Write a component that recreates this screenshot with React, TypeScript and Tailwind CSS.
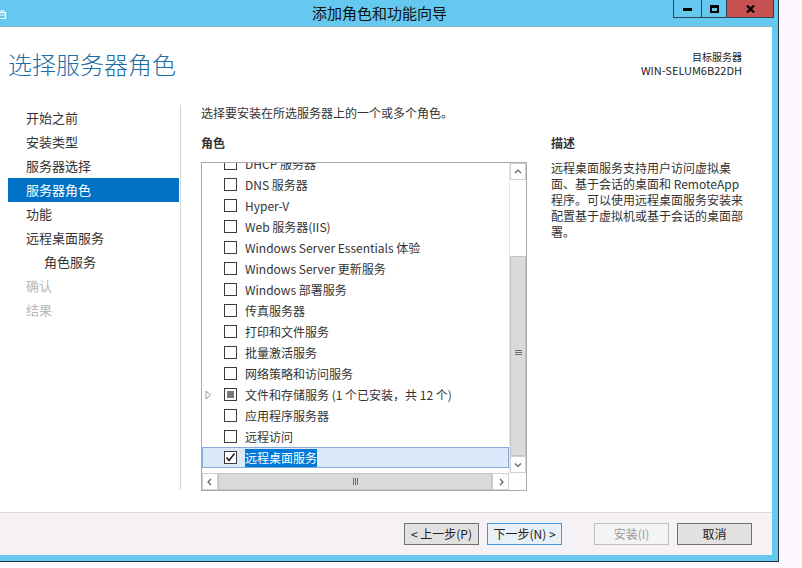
import React from 'react';

type Role = { label: string; state?: 'checked' | 'partial'; expandable?: boolean; selected?: boolean };

const roles: Role[] = [
    { label: 'DHCP 服务器' },
    { label: 'DNS 服务器' },
    { label: 'Hyper-V' },
    { label: 'Web 服务器(IIS)' },
    { label: 'Windows Server Essentials 体验' },
    { label: 'Windows Server 更新服务' },
    { label: 'Windows 部署服务' },
    { label: '传真服务器' },
    { label: '打印和文件服务' },
    { label: '批量激活服务' },
    { label: '网络策略和访问服务' },
    { label: '文件和存储服务 (1 个已安装，共 12 个)', state: 'partial', expandable: true },
    { label: '应用程序服务器' },
    { label: '远程访问' },
    { label: '远程桌面服务', state: 'checked', selected: true },
];

const steps = [
    { label: '开始之前' },
    { label: '安装类型' },
    { label: '服务器选择' },
    { label: '服务器角色', active: true },
    { label: '功能' },
    { label: '远程桌面服务' },
    { label: '角色服务', indent: true },
    { label: '确认', disabled: true },
    { label: '结果', disabled: true },
];

function Checkbox({ state }: { state?: 'checked' | 'partial' }) {
    return (
        <div className="w-[13px] h-[13px] border border-[#3c3c3c] bg-white flex items-center justify-center shrink-0">
            {state === 'partial' && <div className="w-[7px] h-[7px] bg-[#7a7a7a]" />}
            {state === 'checked' && (
                <svg width="11" height="11" viewBox="0 0 11 11">
                    <path d="M1.5 5.5 L4 8.5 L9.5 1.5" fill="none" stroke="#222" strokeWidth="1.6" />
                </svg>
            )}
        </div>
    );
}

function Chevron({ dir }: { dir: 'up' | 'down' | 'left' | 'right' }) {
    const d = {
        up: 'M2 6 L5 3 L8 6',
        down: 'M2 3.5 L5 6.5 L8 3.5',
        left: 'M6 2 L3 5 L6 8',
        right: 'M4 2 L7 5 L4 8',
    }[dir];
    return (
        <svg width="10" height="10" viewBox="0 0 10 10">
            <path d={d} fill="none" stroke="#606060" strokeWidth="1.2" />
        </svg>
    );
}

export default function App() {
    return (
        <div className="flex w-[802px] h-[568px] bg-[#fdf8fd] font-['Noto_Sans_CJK_SC',sans-serif] text-[#333]">
            {/* Window */}
            <div className="w-[779px] h-[562px] bg-[#64c8ef] border-r border-b border-[#28323c] flex flex-col shrink-0">
                {/* Title bar */}
                <div className="relative h-[27px] border-b border-[#86b6cc] flex items-center shrink-0">
                    <svg className="absolute left-0 top-[10px]" width="7" height="9" viewBox="0 0 7 9">
                        <path d="M-1 2.5 H5.5 V8.5 H-1" fill="none" stroke="#fff" strokeWidth="1.2" />
                        <path d="M1 2.5 V0.8 H4 V2.5" fill="none" stroke="#fff" strokeWidth="1" />
                        <path d="M-1 5 H5.5" stroke="#fff" strokeWidth="1" />
                    </svg>
                    <span className="pl-[312px] text-[15px] text-[#111] leading-none -mt-[2px]">添加角色和功能向导</span>
                    <div className="absolute right-[4px] top-0 flex h-[18px] border border-t-0 border-[#33414f]">
                        <div className="w-[28px] flex items-center justify-center border-r border-[#33414f]">
                            <div className="w-[9px] h-[3px] bg-black mt-[2px]" />
                        </div>
                        <div className="w-[25px] flex items-center justify-center border-r border-[#33414f]">
                            <div className="w-[9px] h-[8px] border-2 border-t-[3px] border-black" />
                        </div>
                        <div className="w-[46px] bg-[#c75050] flex items-center justify-center">
                            <svg width="9" height="8" viewBox="0 0 9 8">
                                <path d="M1 0.5 L8 7.5 M8 0.5 L1 7.5" stroke="#000" strokeWidth="2.2" />
                            </svg>
                        </div>
                    </div>
                </div>

                <div className="flex-1 flex pr-[6px] pb-[6px] min-h-0">
                    <div className="flex-1 bg-white flex flex-col">
                        {/* Header */}
                        <div className="h-[78px] flex justify-between shrink-0">
                            <h1 className="pl-[8px] pt-[22px] text-[24px] leading-[30px] font-light text-[#1b6da5]">选择服务器角色</h1>
                            <div className="pr-[30px] pt-[24px] text-right text-[#222]">
                                <div className="text-[10px] leading-[12px]">目标服务器</div>
                                <div className="mt-[1px] text-[11px] leading-[13px]">WIN-SELUM6B22DH</div>
                            </div>
                        </div>

                        {/* Body */}
                        <div className="h-[386px] flex shrink-0">
                            {/* Step nav */}
                            <div className="w-[181px] border-r border-[#d4d4d4] pl-[8px] pr-[1px] pt-[1px] mb-[1px]">
                                {steps.map((s) => (
                                    <div
                                        key={s.label}
                                        className={`h-[24px] flex items-center text-[13px] ${s.indent ? 'pl-[36px]' : 'pl-[18px]'} ${s.active ? 'bg-[#0072c6] text-white' : s.disabled ? 'text-[#b8b8b8]' : 'text-[#333]'}`}
                                    >
                                        {s.label}
                                    </div>
                                ))}
                            </div>

                            {/* Main */}
                            <div className="pl-[20px] flex">
                                <div className="flex flex-col">
                                    <p className="text-[12px] leading-[16px]">选择要安装在所选服务器上的一个或多个角色。</p>
                                    <h3 className="mt-[14px] text-[12px] leading-[16px] font-bold">角色</h3>
                                    <div className="mt-[11px] w-[326px] h-[329px] border border-[#ababab] flex flex-col">
                                        <div className="flex flex-1 min-h-0">
                                            <div className="flex-1 overflow-hidden">
                                                <div className="-mt-[10px]">
                                                    {roles.map((r) => (
                                                        <div
                                                            key={r.label}
                                                            className={`h-[21px] flex items-center border text-[12px] ${r.selected ? 'bg-[#dce9fa] border-[#84aad9]' : 'border-transparent'}`}
                                                        >
                                                            <div className="w-[21px] pl-[2px] flex items-center">
                                                                {r.expandable && (
                                                                    <svg width="7" height="10" viewBox="0 0 7 10">
                                                                        <path d="M1 1 L5.5 5 L1 9 Z" fill="none" stroke="#9a9a9a" strokeWidth="1" />
                                                                    </svg>
                                                                )}
                                                            </div>
                                                            <Checkbox state={r.state} />
                                                            <span className={`ml-[8px] whitespace-nowrap ${r.selected ? 'bg-[#0078d7] text-white' : ''}`}>{r.label}</span>
                                                        </div>
                                                    ))}
                                                </div>
                                            </div>
                                            {/* Vertical scrollbar */}
                                            <div className="w-[17px] flex flex-col bg-white border-l border-[#e6e6e6]">
                                                <div className="h-[17px] flex items-center justify-center border border-[#d0d0d0] bg-white">
                                                    <Chevron dir="up" />
                                                </div>
                                                <div className="flex-1 flex flex-col">
                                                    <div className="h-[76px]" />
                                                    <div className="flex-1 bg-[#dadada] border border-[#c4c4c4] flex items-center justify-center">
                                                        <div className="flex flex-col gap-[1px] -mt-[7px]">
                                                            <div className="w-[7px] h-[1px] bg-[#6a6a6a]" />
                                                            <div className="w-[7px] h-[1px] bg-[#6a6a6a]" />
                                                            <div className="w-[7px] h-[1px] bg-[#6a6a6a]" />
                                                        </div>
                                                    </div>
                                                </div>
                                                <div className="h-[17px] flex items-center justify-center border border-[#d0d0d0] bg-white">
                                                    <Chevron dir="down" />
                                                </div>
                                            </div>
                                        </div>
                                        {/* Horizontal scrollbar */}
                                        <div className="h-[17px] flex bg-white">
                                            <div className="w-[16px] flex items-center justify-center border border-[#d0d0d0]">
                                                <Chevron dir="left" />
                                            </div>
                                            <div className="w-[274px] bg-[#dadada] border border-[#c4c4c4] flex items-center justify-center">
                                                <div className="flex gap-[1px]">
                                                    <div className="w-[1px] h-[7px] bg-[#6a6a6a]" />
                                                    <div className="w-[1px] h-[7px] bg-[#6a6a6a]" />
                                                    <div className="w-[1px] h-[7px] bg-[#6a6a6a]" />
                                                </div>
                                            </div>
                                            <div className="w-[17px] flex items-center justify-center border border-[#d0d0d0]">
                                                <Chevron dir="right" />
                                            </div>
                                            <div className="flex-1 bg-white" />
                                        </div>
                                    </div>
                                </div>

                                {/* Description */}
                                <div className="ml-[24px] pt-[30px] w-[200px]">
                                    <h3 className="text-[12px] leading-[16px] font-bold">描述</h3>
                                    <p className="mt-[9px] text-[12px] leading-[16px]">
                                        远程桌面服务支持用户访问虚拟桌<br />
                                        面、基于会话的桌面和 RemoteApp<br />
                                        程序。可以使用远程桌面服务安装来<br />
                                        配置基于虚拟机或基于会话的桌面部<br />
                                        署。
                                    </p>
                                </div>
                            </div>
                        </div>

                        <div className="flex-1" />

                        {/* Footer */}
                        <div className="h-[43px] border-t border-[#dcdcdc] bg-[#f5f1f5] flex items-start justify-end pt-[10px] pr-[20px] shrink-0">
                            <button className="w-[75px] h-[22px] border border-[#707070] bg-[#e1e1e1] text-[12px] text-[#222]">&lt; 上一步(P)</button>
                            <button className="ml-[8px] w-[75px] h-[22px] border border-[#3c99e0] bg-[#e8f0f8] text-[12px] text-[#222]">下一步(N) &gt;</button>
                            <button className="ml-[32px] w-[75px] h-[22px] border border-[#bfbfbf] bg-[#f4f4f4] text-[12px] text-[#9a9a9a]">安装(I)</button>
                            <button className="ml-[8px] w-[75px] h-[22px] border border-[#707070] bg-[#e1e1e1] text-[12px] text-[#222]">取消</button>
                        </div>
                    </div>
                </div>
            </div>
            <div className="flex-1" />
        </div>
    );
}
